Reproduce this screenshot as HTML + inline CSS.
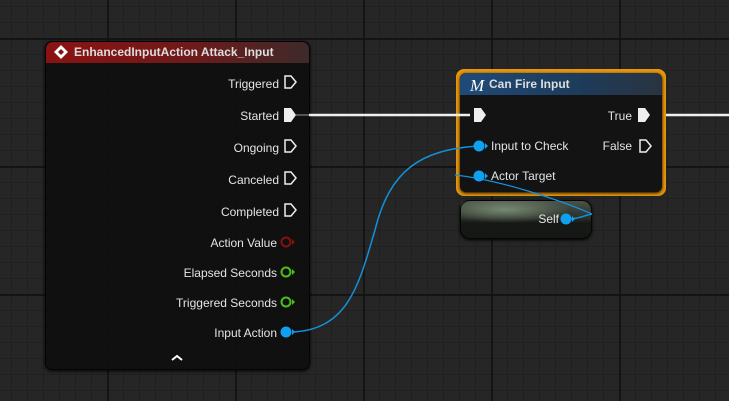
<!DOCTYPE html><html><head><style>
body{margin:0;width:729px;height:401px;overflow:hidden;font-family:"Liberation Sans",sans-serif;background-color:#262626;}
.bg{position:absolute;left:0;top:0;width:729px;height:401px;background-color:#262626;
background-image:
linear-gradient(90deg,#141414 2px,transparent 2px),
linear-gradient(#141414 2px,transparent 2px),
linear-gradient(90deg,#202020 1px,transparent 1px),
linear-gradient(#202020 1px,transparent 1px);
background-size:128px 128px,128px 128px,16px 16px,16px 16px;
background-position:107px 38px,107px 38px,11px 6px,11px 6px;}
.node{position:absolute;background:rgba(14,15,14,0.95);border-radius:7px;box-shadow:0 1px 3px #000;}
.hdr{position:absolute;left:0;top:0;right:0;height:21px;border-radius:7px 7px 0 0;color:#ddd;font-weight:bold;font-size:12px;line-height:21px;}
.lbl{position:absolute;color:#e4e4e4;font-size:12px;white-space:nowrap}
.r{text-align:right}
svg{position:absolute;left:0;top:0}
</style></head><body>
<div class="bg"></div>
<div class="node" style="left:45px;top:41px;width:263px;height:327px;border:1px solid #050505">
 <div class="hdr" style="background:linear-gradient(90deg,#8c1212,#6e1a1a 55%,#3e2a2a);padding-left:28px">EnhancedInputAction Attack_Input</div>
 <div class="lbl r" style="right:30px;top:35px">Triggered</div>
 <div class="lbl r" style="right:30px;top:67px">Started</div>
 <div class="lbl r" style="right:30px;top:99px">Ongoing</div>
 <div class="lbl r" style="right:30px;top:131px">Canceled</div>
 <div class="lbl r" style="right:30px;top:163px">Completed</div>
 <div class="lbl r" style="right:32px;top:194px">Action Value</div>
 <div class="lbl r" style="right:32px;top:224px">Elapsed Seconds</div>
 <div class="lbl r" style="right:32px;top:254px">Triggered Seconds</div>
 <div class="lbl r" style="right:32px;top:284px">Input Action</div>
</div>
<div style="position:absolute;left:456px;top:69px;width:206px;height:123px;border:2px solid #e8960c;border-radius:8px;background:#e8960c"></div>
<div class="node" style="left:460px;top:73px;width:202px;height:119px;border-radius:6px;background:#121312">
 <div class="hdr" style="background:linear-gradient(90deg,#1f4a78,#1e3b5a 60%,#2a3440);padding-left:29px;height:22px;line-height:22px">Can Fire Input</div>
 <div class="lbl" style="left:31px;top:66px">Input to Check</div>
 <div class="lbl" style="left:31px;top:96px">Actor Target</div>
 <div class="lbl r" style="right:30px;top:36px">True</div>
 <div class="lbl r" style="right:30px;top:66px">False</div>
</div>
<div class="node" style="left:460px;top:200px;width:130px;height:37px;border-radius:10px;border:1px solid #050505;background:linear-gradient(180deg,#4a5248,#2a2f2a 45%,#161816 60%,#151715);">
 <div style="position:absolute;left:0px;top:0px;width:110px;height:22px;background:radial-gradient(ellipse at 40% 40%,rgba(170,200,160,.55),transparent 70%)"></div>
 <div class="lbl r" style="right:32px;top:11px">Self</div>
</div>
<svg width="729" height="401">
 <line x1="309" y1="115" x2="470" y2="115" stroke="#eee" stroke-width="2.5"/>
 <line x1="666" y1="115" x2="729" y2="115" stroke="#eee" stroke-width="2.5"/>
 <line x1="296" y1="115" x2="309" y2="115" stroke="#555" stroke-width="2"/>
 <path d="M292 332 C350 330,360 280,375 230 C390 170,420 150,478 146" stroke="#1491d8" stroke-width="1.5" fill="none"/>
 <path d="M455 175 C500 180,560 200,592 214" stroke="#1491d8" stroke-width="1.2" fill="none"/>
 <path d="M568 219 C580 219,585 215,592 214" stroke="#1491d8" stroke-width="1.5" fill="none"/>
 <g fill="none" stroke="#eee" stroke-width="1.5">
  <path d="M285 76h6l5 6-5 6h-6z"/>
  <path d="M285 140h6l5 6-5 6h-6z"/>
  <path d="M285 172h6l5 6-5 6h-6z"/>
  <path d="M285 204h6l5 6-5 6h-6z"/>
  <path d="M640 140h6l5 6-5 6h-6z"/>
 </g>
 <g fill="#eee">
  <path d="M284 108h7l5 7-5 7h-7z"/>
  <path d="M474 108h7l5 7-5 7h-7z"/>
  <path d="M638 108h7l5 7-5 7h-7z"/>
 </g>
 <circle cx="286" cy="242" r="4.5" fill="none" stroke="#8a0f0f" stroke-width="2"/><path d="M292 239l3 3-3 3z" fill="#8a0f0f"/>
 <circle cx="286" cy="272" r="4.5" fill="none" stroke="#4cc01a" stroke-width="2"/><path d="M292 269l3 3-3 3z" fill="#4cc01a"/>
 <circle cx="286" cy="302" r="4.5" fill="none" stroke="#4cc01a" stroke-width="2"/><path d="M292 299l3 3-3 3z" fill="#4cc01a"/>
 <circle cx="286" cy="332" r="5.5" fill="#10a0f0"/><path d="M292 329l3 3-3 3z" fill="#10a0f0"/>
 <circle cx="479" cy="146" r="5.5" fill="#10a0f0"/><path d="M485 143l3 3-3 3z" fill="#10a0f0"/>
 <circle cx="479" cy="176" r="5.5" fill="#10a0f0"/><path d="M485 173l3 3-3 3z" fill="#10a0f0"/>
 <circle cx="566" cy="219" r="5.5" fill="#10a0f0"/><path d="M572 216l3 3-3 3z" fill="#10a0f0"/>
 <path d="M61 45l7 7-7 7-7-7z" fill="#fff"/><path d="M61 49l3 3-3 3-3-3z" fill="#8c1212"/>
 <text x="470" y="91" fill="#fff" font-family="Liberation Serif" font-style="italic" font-size="17">M</text>
 <path d="M172 360l5-4 5 4" fill="none" stroke="#fff" stroke-width="2"/>
</svg>
</body></html>
